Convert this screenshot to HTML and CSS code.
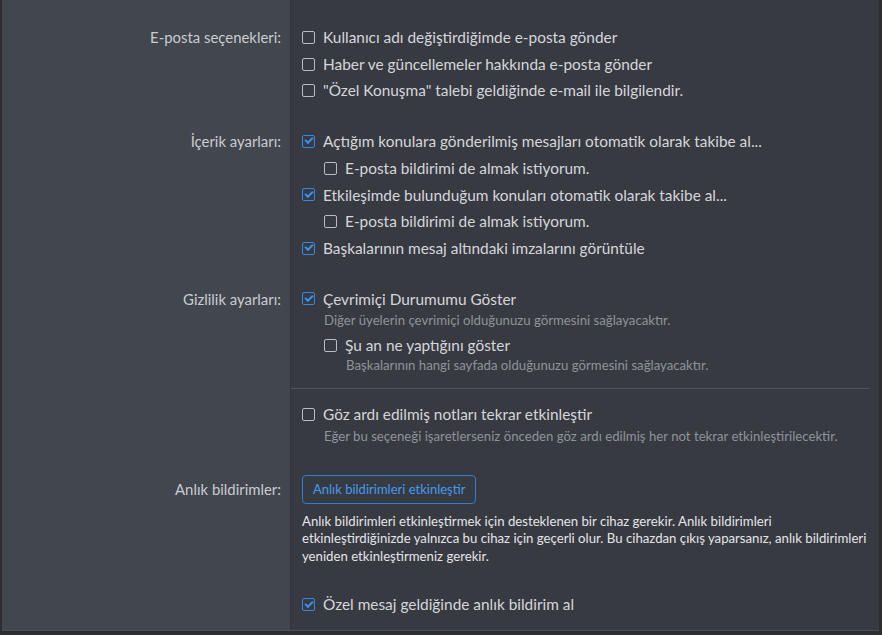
FILE: index.html
```html
<!DOCTYPE html>
<html lang="tr">
<head>
  <meta charset="utf-8">
  <link rel="stylesheet" href="styles.css">
</head>
<body>
  <div class="prefs">
    <div class="row">
      <div class="label">E-posta seçenekleri:</div>
      <div class="field">
        <ul class="checks">
          <li><label><span class="box"></span>Kullanıcı adı değiştirdiğimde e-posta gönder</label></li>
          <li><label><span class="box"></span>Haber ve güncellemeler hakkında e-posta gönder</label></li>
          <li><label><span class="box"></span>"Özel Konuşma" talebi geldiğinde e-mail ile bilgilendir.</label></li>
        </ul>
      </div>
    </div>

    <div class="row">
      <div class="label">İçerik ayarları:</div>
      <div class="field">
        <ul class="checks">
          <li><label><span class="box on"></span>Açtığım konulara gönderilmiş mesajları otomatik olarak takibe al...</label></li>
          <li class="sub"><label><span class="box"></span>E-posta bildirimi de almak istiyorum.</label></li>
          <li><label><span class="box on"></span>Etkileşimde bulunduğum konuları otomatik olarak takibe al...</label></li>
          <li class="sub"><label><span class="box"></span>E-posta bildirimi de almak istiyorum.</label></li>
          <li><label><span class="box on"></span>Başkalarının mesaj altındaki imzalarını görüntüle</label></li>
        </ul>
      </div>
    </div>

    <div class="row">
      <div class="label">Gizlilik ayarları:</div>
      <div class="field split">
        <ul class="checks">
          <li>
            <label><span class="box on"></span>Çevrimiçi Durumumu Göster</label>
            <p class="hint">Diğer üyelerin çevrimiçi olduğunuzu görmesini sağlayacaktır.</p>
            <ul class="checks">
              <li>
                <label><span class="box"></span>Şu an ne yaptığını göster</label>
                <p class="hint">Başkalarının hangi sayfada olduğunuzu görmesini sağlayacaktır.</p>
              </li>
            </ul>
          </li>
        </ul>
      </div>
    </div>

    <div class="row">
      <div class="label"></div>
      <div class="field">
        <ul class="checks">
          <li>
            <label><span class="box"></span>Göz ardı edilmiş notları tekrar etkinleştir</label>
            <p class="hint">Eğer bu seçeneği işaretlerseniz önceden göz ardı edilmiş her not tekrar etkinleştirilecektir.</p>
          </li>
        </ul>
      </div>
    </div>

    <div class="row">
      <div class="label label-btn">Anlık bildirimler:</div>
      <div class="field field-btn">
        <button class="btn">Anlık bildirimleri etkinleştir</button>
        <p class="explain">Anlık bildirimleri etkinleştirmek için desteklenen bir cihaz gerekir. Anlık bildirimleri etkinleştirdiğinizde yalnızca bu cihaz için geçerli olur. Bu cihazdan çıkış yaparsanız, anlık bildirimleri yeniden etkinleştirmeniz gerekir.</p>
      </div>
    </div>

    <div class="row">
      <div class="label"></div>
      <div class="field">
        <ul class="checks">
          <li><label><span class="box on"></span>Özel mesaj geldiğinde anlık bildirim al</label></li>
        </ul>
      </div>
    </div>
  </div>
</body>
</html>
```

FILE: styles.css
```css
body {
  margin: 0;
  height: 635px;
  overflow: hidden;
  background-color: #2c2e33;
  font-family: Lato, "Noto Sans", sans-serif;
  font-size: 15.4px;
  color: #d4d6da;
}

.prefs {
  margin: 0 3px 0 2px;
  padding-top: 12px;
  background: linear-gradient(to right, #42464e 288px, #33353b 288px, #33353b 289px, #383a42 289px);
  border-bottom: 1px solid #4b4e56;
}

.row {
  display: grid;
  grid-template-columns: 289px 1fr;
}

.label {
  padding: 15px 10px 0 0;
  font-size: 14.9px;
  line-height: 20.7px;
  text-align: right;
  color: #c9ccd1;
}

.label-btn {
  padding-top: 19px;
}

.field {
  padding: 12px 10px 12px 11px;
}

.split {
  padding-bottom: 8px;
  border-bottom: 1px solid #4e5159;
  margin-right: 10px;
  padding-right: 0;
}

.checks {
  list-style: none;
  margin: 0;
  padding: 0;
}

.checks li {
  padding: 3px 0;
}

.checks .checks {
  margin-top: 3px;
  padding-left: 22px;
}

.checks li.sub {
  padding-left: 22px;
}

.checks label {
  display: flex;
  align-items: center;
  line-height: 20.7px;
}

.box {
  position: relative;
  width: 11px;
  height: 11px;
  margin-right: 8px;
  border: 1.5px solid #b9bcc2;
  border-radius: 2px;
  flex-shrink: 0;
}

.box.on {
  border-color: #2f8ae6;
}

.box.on::after {
  content: "";
  position: absolute;
  left: 2px;
  top: 1.5px;
  width: 6px;
  height: 3px;
  border-left: 2px solid #3a95ef;
  border-bottom: 2px solid #3a95ef;
  transform: rotate(-45deg);
}

.hint {
  margin: 2px 0 0 22px;
  font-size: 13.2px;
  line-height: 18px;
  color: #8e939b;
}

.checks .checks .hint {
  margin-top: 0;
}

.field-btn {
  padding-top: 15px;
}

.btn {
  display: block;
  height: 29px;
  padding: 0 10px;
  background: transparent;
  border: 1px solid #2b7fd4;
  border-radius: 4px;
  font-family: inherit;
  font-size: 13px;
  color: #3f9df2;
  cursor: pointer;
}

.explain {
  margin: 9px 0 2px;
  font-size: 13.2px;
  line-height: 17.5px;
  color: #e3e5e8;
}
```
